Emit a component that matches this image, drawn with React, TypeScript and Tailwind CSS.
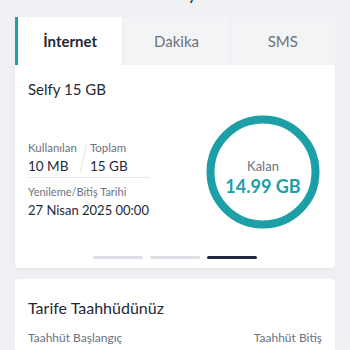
import { useState } from "react";

const tabs = ["İnternet", "Dakika", "SMS"];

const Donut = () => (
	<div className="relative w-[114px] h-[114px] shrink-0">
		<svg width="114" height="114" viewBox="0 0 114 114" className="absolute inset-0">
			<circle cx="57" cy="57" r="52.5" fill="none" stroke="#1c9fa6" strokeWidth="8" />
		</svg>
		<div className="absolute inset-0 flex flex-col items-center justify-center pt-[11px]">
			<span className="text-[13px] text-[#6b7280] leading-4">Kalan</span>
			<span className="text-[18px] font-bold text-[#1c9fa6] leading-6">14.99 GB</span>
		</div>
	</div>
);

export default function App() {
	const [active, setActive] = useState(0);

	return (
		<div
			className="w-[350px] h-[350px] overflow-hidden bg-[#eff0f3] px-[15px]"
			style={{ fontFamily: "Lato, 'Open Sans', sans-serif" }}
		>
			<div className="h-[17px] relative">
				<span className="absolute left-[32px] -top-[17px] text-[18px] text-[#1f2937] leading-5">
					Kalan Kullanımlarıy
				</span>
			</div>

			<div className="flex gap-[2px] h-[48px]">
				{tabs.map((t, i) => (
					<button
						type="button"
						key={t}
						onClick={() => setActive(i)}
						className={`flex-1 flex items-center justify-center text-[15px] ${
							active === i
								? "bg-white text-[#1f2937] font-bold border-l-[3px] border-[#1c9fa6]"
								: "bg-[#f3f4f6] text-[#6b7280]"
						}`}
					>
						{t}
					</button>
				))}
			</div>

			<div className="bg-white rounded-b-[4px] shadow-[0_1px_3px_rgba(0,0,0,0.05)] px-[13px] pt-[14px] pb-[9px]">
				<div className="text-[15px] text-[#1f2937] leading-5">Selfy 15 GB</div>

				<div className="flex items-start justify-between mt-[16px]">
					<div className="w-[122px] pt-[25px]">
						<div className="flex">
							<div>
								<div className="text-[11.5px] text-[#6b7280] leading-4">Kullanılan</div>
								<div className="text-[13.5px] text-[#1f2937] leading-5">10 MB</div>
							</div>
							<div className="w-px h-[30px] bg-[#e5e7eb] mx-[6px] mt-[3px] rotate-[12deg]" />
							<div>
								<div className="text-[11.5px] text-[#6b7280] leading-4">Toplam</div>
								<div className="text-[13.5px] text-[#1f2937] leading-5">15 GB</div>
							</div>
						</div>
						<div className="h-px bg-[#e5e7eb] mt-[1px] mb-[6px]" />
						<div className="text-[11px] text-[#6b7280] leading-4 whitespace-nowrap">
							Yenileme/Bitiş Tarihi
						</div>
						<div className="text-[13px] text-[#1f2937] leading-5 whitespace-nowrap">
							27 Nisan 2025 00:00
						</div>
					</div>
					<div className="mr-[2px]">
						<Donut />
					</div>
				</div>

				<div className="flex justify-center gap-[7px] mt-[27px]">
					<div className="w-[50px] h-[3px] rounded-full bg-[#dde0e6]" />
					<div className="w-[50px] h-[3px] rounded-full bg-[#dde0e6]" />
					<div className="w-[50px] h-[3px] rounded-full bg-[#1e2a3b]" />
				</div>
			</div>

			<div className="bg-white rounded-[4px] mt-[11px] px-[13px] pt-[19px] pb-4">
				<div className="text-[16px] text-[#1f2937] leading-5">Tarife Taahhüdünüz</div>
				<div className="flex justify-between mt-[12px]">
					<div>
						<div className="text-[12px] text-[#6b7280] leading-4">Taahhüt Başlangıç</div>
						<div className="text-[14px] text-[#1f2937] leading-5">24 Nisan 2025</div>
					</div>
					<div className="text-right">
						<div className="text-[12px] text-[#6b7280] leading-4">Taahhüt Bitiş</div>
						<div className="text-[14px] text-[#1f2937] leading-5">30 Mart 2026</div>
					</div>
				</div>
			</div>
		</div>
	);
}
